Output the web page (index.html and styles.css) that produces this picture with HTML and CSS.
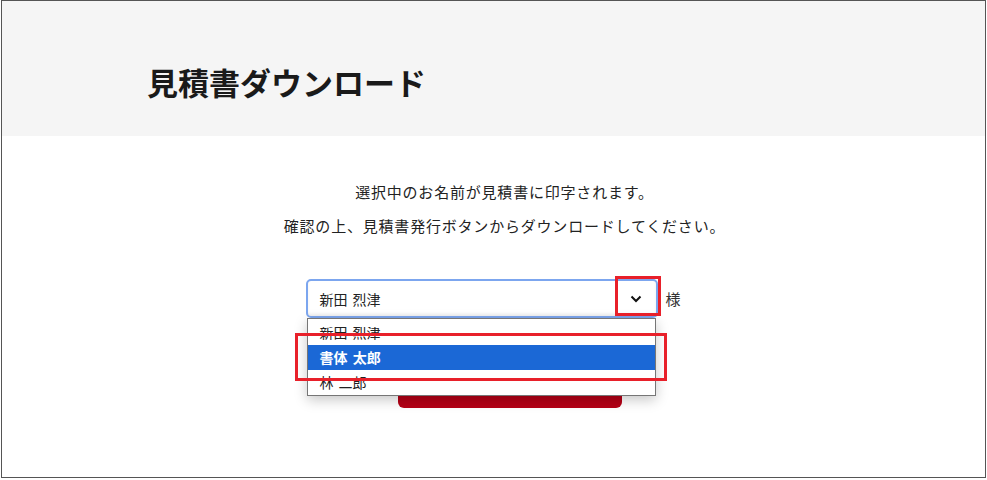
FILE: index.html
```html
<!DOCTYPE html>
<html lang="ja">
<head>
  <meta charset="UTF-8" />
  <meta name="viewport" content="width=device-width, initial-scale=1.0"/>
  <title>見積書ダウンロード</title>
  <link rel="stylesheet" href="styles.css">
</head>
<body>

  <div class="page">
    <div class="header">
      <h1>見積書ダウンロード</h1>
    </div>

    <div class="main">
      <div class="lead">
        <p>選択中のお名前が見積書に印字されます。</p>
        <p>確認の上、見積書発行ボタンからダウンロードしてください。</p>
      </div>

      <div class="field-row">
        <div class="field">
          <div class="select">
            <span class="select-value">新田 烈津</span>
            <svg class="chevron" width="12" height="8" viewBox="0 0 12 8">
              <path d="M1.5 1.5 L6 6 L10.5 1.5" fill="none" stroke="#111" stroke-width="2"/>
            </svg>
          </div>
          <span class="suffix">様</span>

          <div class="dropdown">
            <div class="options">
              <div class="option">新田 烈津</div>
              <div class="option selected">書体 太郎</div>
              <div class="option">林 二郎</div>
            </div>
          </div>

          <div class="mark mark-arrow"></div>
          <div class="mark mark-option"></div>
        </div>
      </div>

      <div class="actions">
        <button class="issue">見積書発行</button>
      </div>
    </div>
  </div>

</body>
</html>
```

FILE: styles.css
```css
body {
  margin: 0;
  font-family: "Noto Sans CJK JP", "Noto Sans", sans-serif;
  color: #222;
  background: #fff;
}

.page {
  width: 983px;
  height: 476px;
  margin-left: 1px;
  border: 1px solid #555;
  overflow: hidden;
}

.header {
  background: #f5f5f5;
  height: 135px;
  display: flex;
  align-items: center;
  padding-left: 145px;
}

.header h1 {
  margin: 0;
  font-size: 31px;
  font-weight: bold;
  color: #1a1a1a;
  padding-top: 26px;
}

.main {
  padding-top: 39px;
}

.lead {
  text-align: center;
  padding-left: 22px;
}

.lead p {
  margin: 0;
  font-size: 15px;
  line-height: 34px;
  letter-spacing: 0.8px;
}

.field-row {
  display: flex;
  justify-content: center;
  margin-top: 36px;
}

.field {
  position: relative;
  display: flex;
  align-items: center;
  gap: 7px;
}

.select {
  width: 323px;
  height: 35px;
  border: 2px solid #7ca6ef;
  border-radius: 5px;
  display: flex;
  align-items: center;
  justify-content: space-between;
  padding: 0 14px 0 11px;
  box-shadow: inset 0 -2px 3px rgba(0,0,0,0.06);
}

.select-value {
  font-size: 14px;
  color: #222;
  word-spacing: 2px;
}

.chevron {
  display: block;
  margin-top: 1px;
}

.suffix {
  font-size: 15px;
  color: #333;
}

.dropdown {
  position: absolute;
  top: 39px;
  left: 1px;
  width: 349px;
  height: 78px;
  border: 1px solid #767676;
  background: #fff;
  box-shadow: 0 4px 12px rgba(0,0,0,0.22);
  padding: 8px 0 4px;
  box-sizing: border-box;
}

.options {
  height: 100%;
  overflow: hidden;
}

.option {
  height: 25px;
  line-height: 25px;
  padding-left: 11px;
  font-size: 14px;
  color: #222;
  word-spacing: 2px;
}

.option:first-child {
  margin-top: -7px;
}

.option.selected {
  background: #1b68d6;
  color: #fff;
  font-weight: bold;
}

.mark {
  position: absolute;
  border: 3px solid #e8202a;
}

.mark-arrow {
  left: 309px;
  top: -3px;
  width: 40px;
  height: 34px;
}

.mark-option {
  left: -11px;
  top: 54px;
  width: 366px;
  height: 42px;
}

.actions {
  text-align: center;
  padding-left: 32px;
  margin-top: 40px;
}

.issue {
  width: 224px;
  height: 50px;
  border: none;
  border-radius: 6px;
  background: #b50016;
  color: #fff;
  font-family: inherit;
  font-size: 15px;
  font-weight: bold;
}
```
